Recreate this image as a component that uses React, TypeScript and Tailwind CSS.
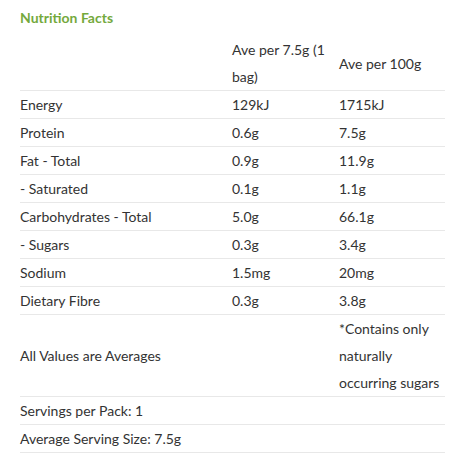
const rows: [string, string, string][] = [
  ['Energy', '129kJ', '1715kJ'],
  ['Protein', '0.6g', '7.5g'],
  ['Fat - Total', '0.9g', '11.9g'],
  ['- Saturated', '0.1g', '1.1g'],
  ['Carbohydrates - Total', '5.0g', '66.1g'],
  ['- Sugars', '0.3g', '3.4g'],
  ['Sodium', '1.5mg', '20mg'],
  ['Dietary Fibre', '0.3g', '3.8g'],
];

export default function App() {
  return (
    <div className="bg-white w-[463px] h-[459px] px-5 pt-[9px] font-['Lato','Open_Sans',sans-serif] text-[14px] text-[#333]">
      <h2 className="text-[14px] font-bold text-[#74a93c] leading-[18px]">Nutrition Facts</h2>
      <table className="mt-[9px] w-[425px] table-fixed border-collapse leading-[27px]">
        <colgroup>
          <col className="w-[212px]" />
          <col className="w-[107px]" />
          <col className="w-[106px]" />
        </colgroup>
        <tbody>
          <tr className="border-b border-[#e8e8e8]">
            <td className="align-middle"></td>
            <td className="align-middle pr-1">Ave per 7.5g (1 bag)</td>
            <td className="align-middle">Ave per 100g</td>
          </tr>
          {rows.map(([label, serve, per100]) => (
            <tr key={label} className="border-b border-[#e8e8e8]">
              <td className="align-middle">{label}</td>
              <td className="align-middle">{serve}</td>
              <td className="align-middle">{per100}</td>
            </tr>
          ))}
          <tr className="border-b border-[#e8e8e8]">
            <td className="align-middle">All Values are Averages</td>
            <td></td>
            <td className="align-middle pr-1">*Contains only naturally occurring sugars</td>
          </tr>
          <tr className="border-b border-[#e8e8e8]">
            <td colSpan={3}>Servings per Pack: 1</td>
          </tr>
          <tr className="border-b border-[#e8e8e8]">
            <td colSpan={3}>Average Serving Size: 7.5g</td>
          </tr>
        </tbody>
      </table>
    </div>
  );
}
